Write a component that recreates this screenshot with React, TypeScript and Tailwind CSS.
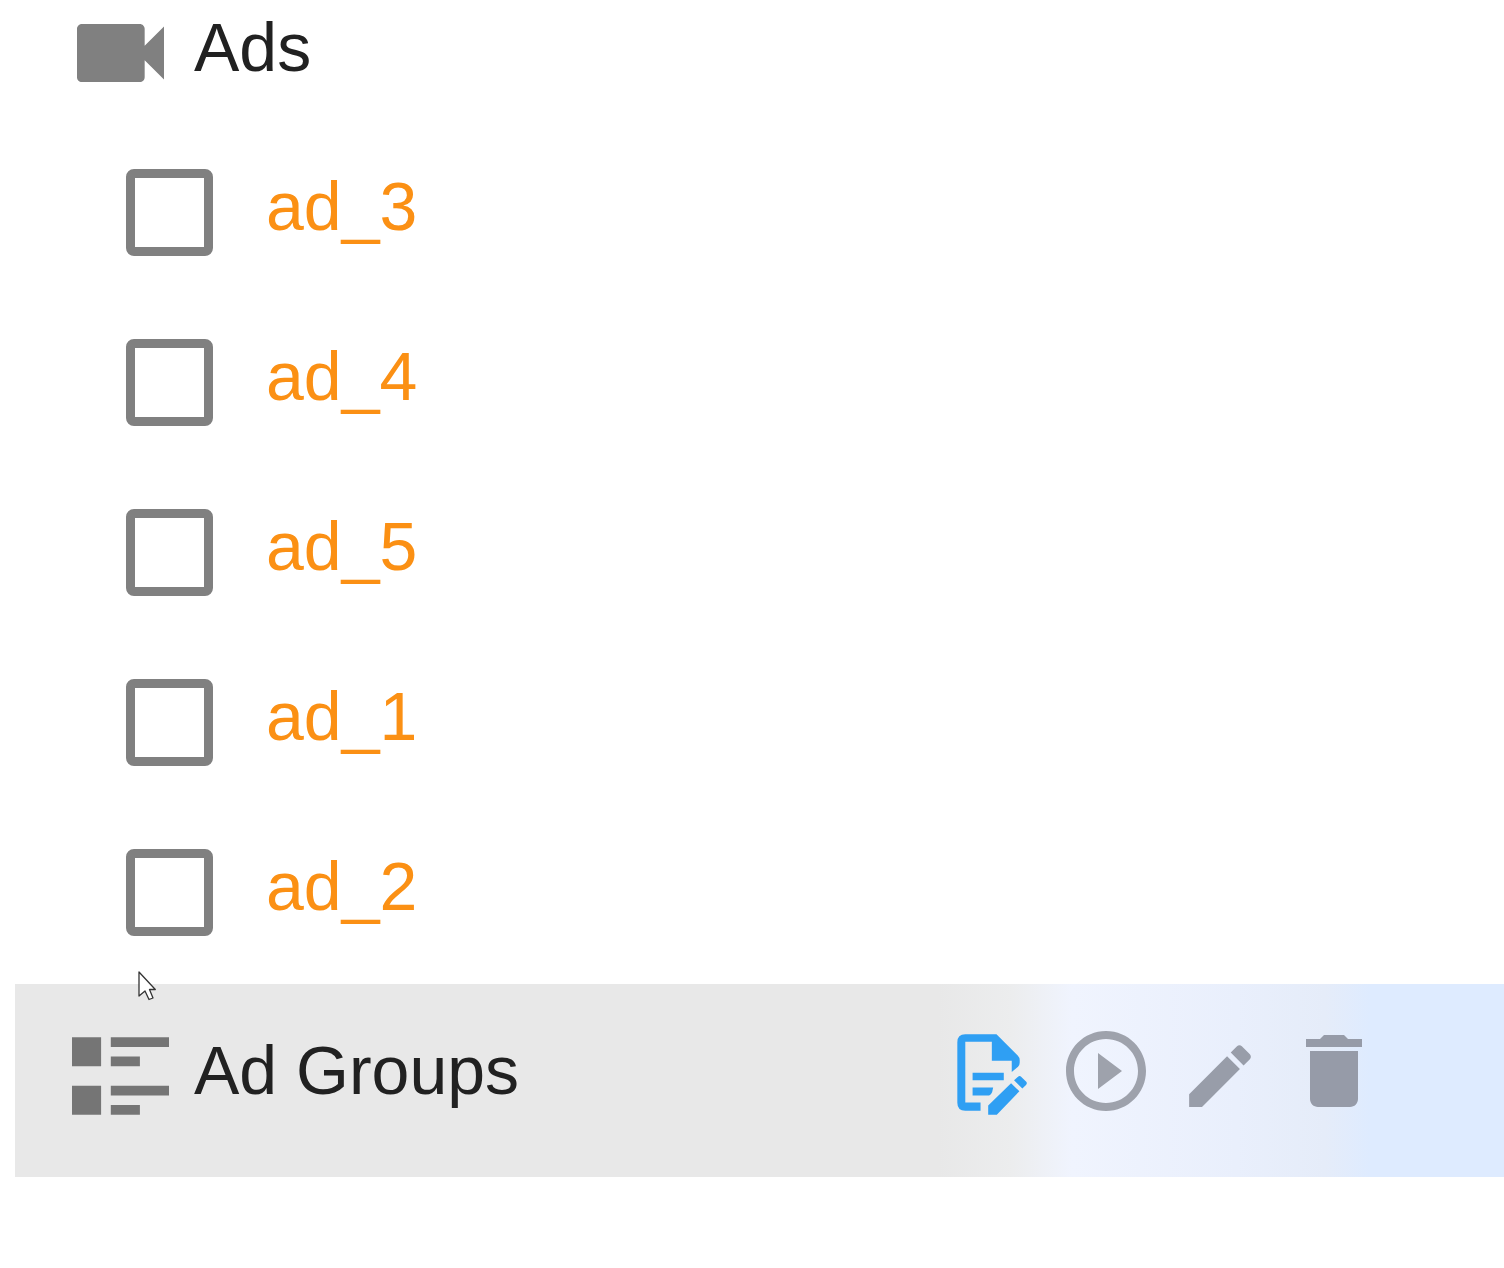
import React from 'react';

const ADS = ['ad_3', 'ad_4', 'ad_5', 'ad_1', 'ad_2'];

function VideoIcon() {
  return (
    <svg viewBox="3 6 18 12" className="w-[87px] h-[58px] fill-[#808080]" aria-hidden="true">
      <path d="M17 10.5V7c0-.55-.45-1-1-1H4c-.55 0-1 .45-1 1v10c0 .55.45 1 1 1h12c.55 0 1-.45 1-1v-3.5l4 4v-11l-4 4z" />
    </svg>
  );
}

function GroupIcon() {
  return (
    <svg viewBox="0 0 20 16" className="w-[97px] h-[78px] fill-[#757575]" aria-hidden="true">
      <path d="M0 0h6v6H0zM8 0h12v2H8zM8 4h6v2H8zM0 10h6v6H0zM8 10h12v2H8zM8 14h6v2H8z" />
    </svg>
  );
}

function DocumentEditIcon() {
  return (
    <svg viewBox="51 51 211 264" className="w-[70px] h-[88px] fill-[#2f9ff3]" aria-hidden="true">
      <path d="M76 72H170L234 136Q240 142 240 150V158Q240 165 235 170L216 186V152H156V95H76V278H122V303H76Q52 303 52 279V96Q52 72 76 72z" />
      <path d="M98 188H192V211H98zM98 233H160L157 246Q153 257 143 257H98z" />
      <path d="M145 315V287L214 220L239 244L171 315zM223 211L235 200Q240 196 245 201L259 215Q264 220 259 225L248 236z" />
    </svg>
  );
}

function PlayIcon() {
  return (
    <svg viewBox="2 2 20 20" className="w-[80px] h-[80px] fill-[#9ea2ac]" aria-hidden="true">
      <path d="M10 16.5l6-4.5-6-4.5v9zM12 2C6.48 2 2 6.48 2 12s4.48 10 10 10 10-4.48 10-10S17.52 2 12 2zm0 18c-4.41 0-8-3.59-8-8s3.59-8 8-8 8 3.59 8 8-3.59 8-8 8z" />
    </svg>
  );
}

function PencilIcon() {
  return (
    <svg viewBox="3 0 18 21" className="w-[62px] h-[72px] fill-[#989da9]" aria-hidden="true">
      <path d="M3 17.25V21h3.75L17.81 9.94l-3.75-3.75L3 17.25zM20.71 7.04c.39-.39.39-1.02 0-1.41l-2.34-2.34c-.39-.39-1.02-.39-1.41 0l-1.83 1.83 3.75 3.75 1.83-1.83z" />
    </svg>
  );
}

function TrashIcon() {
  return (
    <svg viewBox="5 3 14 18" className="w-[56px] h-[74px] fill-[#969ba8]" aria-hidden="true">
      <path d="M6 19c0 1.1.9 2 2 2h8c1.1 0 2-.9 2-2V7H6v12zM19 4h-3.5l-1-1h-5l-1 1H5v2h14V4z" />
    </svg>
  );
}

function Pointer() {
  return (
    <svg viewBox="0 0 18 30" className="absolute left-[123px] -top-[13px] w-[18px] h-[30px]" aria-hidden="true">
      <path
        d="M1 1V25L7 20L11 28.500L15 27L11.500 18.500H17.300z"
        fill="#fff"
        stroke="#333"
        strokeWidth="1.300"
        strokeLinejoin="round"
      />
    </svg>
  );
}

const actions = [
  { label: 'Edit details', icon: DocumentEditIcon },
  { label: 'Run', icon: PlayIcon },
  { label: 'Rename', icon: PencilIcon },
  { label: 'Delete', icon: TrashIcon },
];

export default function App() {
  return (
    <main className="min-h-screen bg-white pl-[15px] font-['Liberation_Sans',Arial,sans-serif] text-[68px] leading-[68px] text-[#212121]">
      <section>
        <div className="flex items-center gap-[25px] pt-[13px] pb-[34px] pl-[57px]">
          <div className="flex w-[97px] shrink-0 justify-center">
            <VideoIcon />
          </div>
          <h2 className="pb-3">Ads</h2>
        </div>
        <ul className="pb-[7px]">
          {ADS.map((ad) => (
            <li key={ad} className="flex h-[170px] items-center gap-[53px] pl-[111px]">
              <input
                id={ad}
                type="checkbox"
                className="size-[87px] shrink-0 appearance-none rounded-[8px] border-[9px] border-[#808080] bg-white checked:bg-[#808080]"
              />
              <label htmlFor={ad} className="pb-3 text-[#fb9014]">
                {ad}
              </label>
            </li>
          ))}
        </ul>
      </section>

      <section className="relative flex items-center gap-[25px] bg-[linear-gradient(90deg,#e8e8e8_62%,#ecedee_67%,#f0f4fe_71%,#e9effc_82%,#e5ecf9_88%,#deebff_91%)] pt-[43px] pr-[130px] pb-[52px] pl-[57px]">
        <div className="flex w-[97px] shrink-0 justify-center">
          <GroupIcon />
        </div>
        <h2 className="pb-3 whitespace-nowrap">Ad Groups</h2>
        <div className="ml-auto flex items-center gap-[34px] pb-[10px]">
          {actions.map((action) => (
            <button
              key={action.label}
              type="button"
              aria-label={action.label}
              className="flex w-[80px] cursor-pointer items-center justify-center"
            >
              <action.icon />
            </button>
          ))}
        </div>
        <Pointer />
      </section>
    </main>
  );
}
